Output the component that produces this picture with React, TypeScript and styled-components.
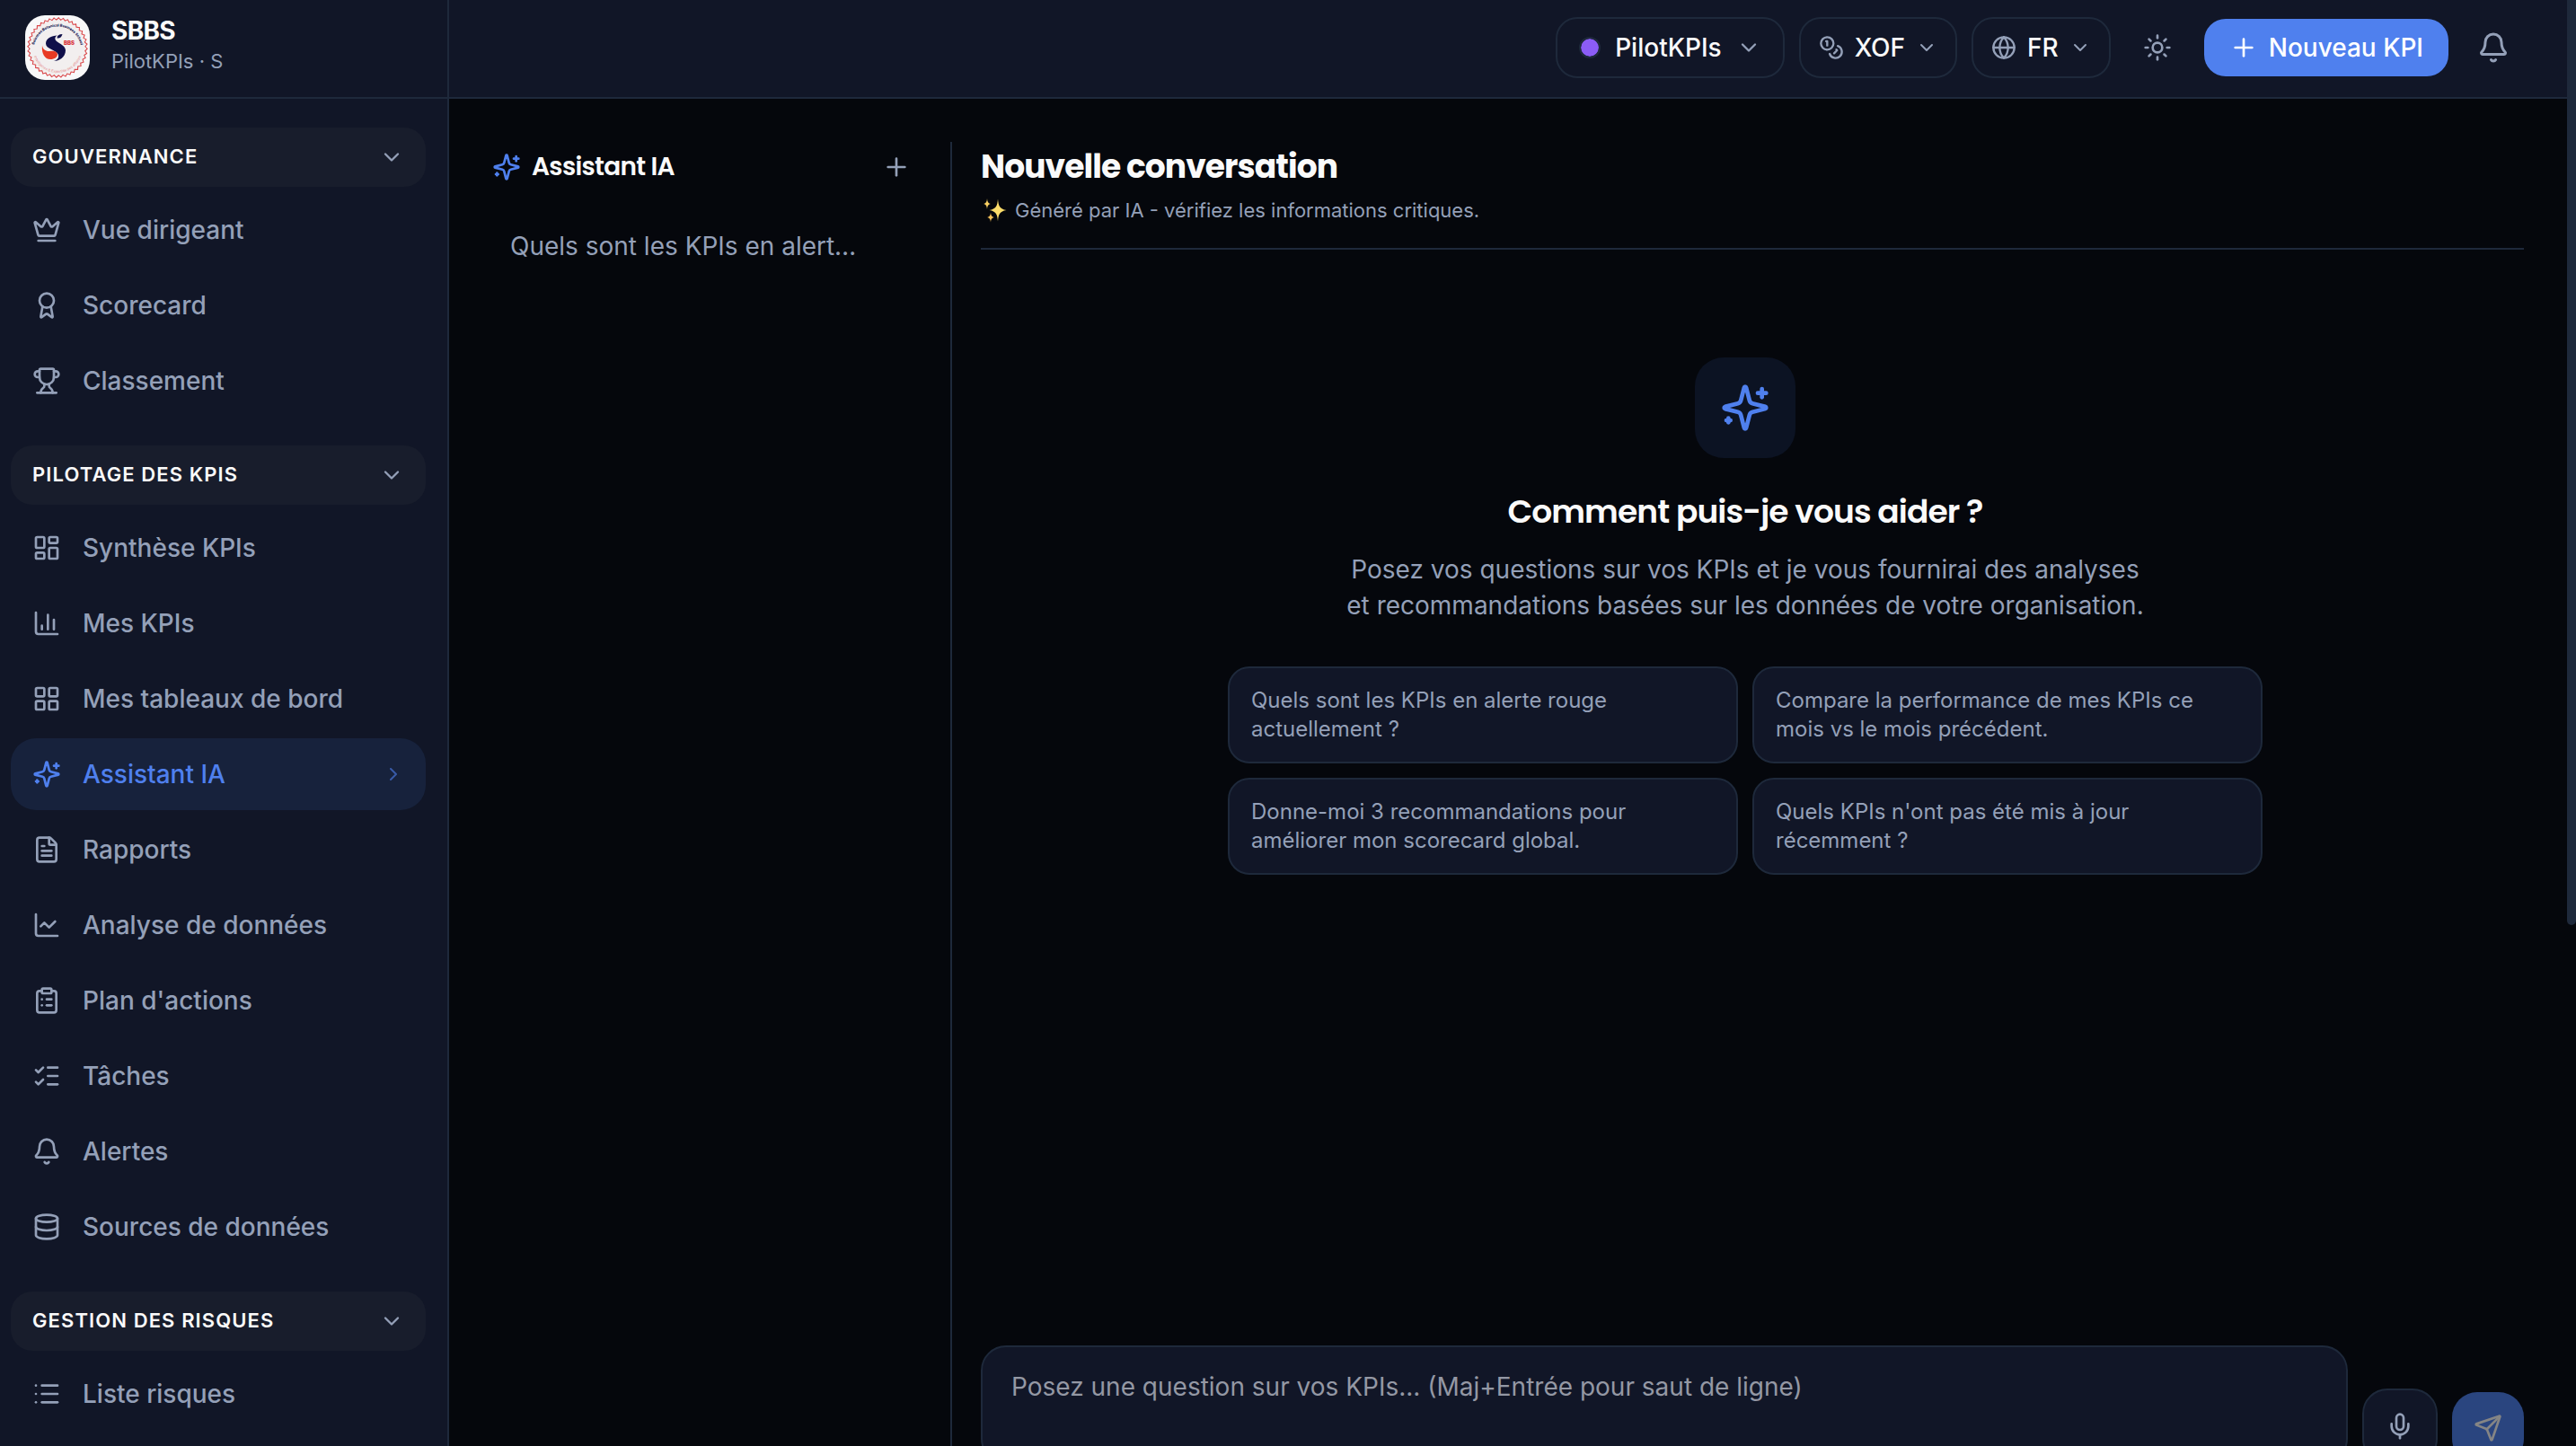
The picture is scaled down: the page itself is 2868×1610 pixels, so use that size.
import React from "react";
import styled, { createGlobalStyle, css } from "styled-components";
import {
  Award,
  Bell,
  ChartColumn,
  ChartLine,
  ChevronDown,
  ChevronRight,
  ClipboardList,
  Crown,
  Database,
  FileText,
  Globe,
  LayoutDashboard,
  LayoutGrid,
  List,
  ListChecks,
  Mic,
  Plus,
  Send,
  Sun,
  Trophy,
} from "lucide-react";

const color = {
  page: "#05070c",
  panel: "#111627",
  section: "#181d2c",
  border: "#1e293b",
  text: "#fafafa",
  muted: "#94a0b8",
  accent: "#4f80ee",
  active: "#17223c",
};

const Global = createGlobalStyle`
  *, *::before, *::after { box-sizing: border-box; }
  body {
    margin: 0;
    background: ${color.page};
    color: ${color.text};
    font-family: Inter, "Noto Sans", sans-serif;
    font-size: 28px;
    line-height: 40px;
    overflow: hidden;
  }
  h1, h2, p, ul { margin: 0; padding: 0; }
  ul { list-style: none; }
  button, textarea { font: inherit; color: inherit; }
  button { border: 0; padding: 0; background: none; cursor: pointer; }
  a { color: inherit; text-decoration: none; }
  svg { flex: none; display: block; }
`;

const Shell = styled.div`
  display: grid;
  grid-template-columns: 500px minmax(0, 1fr) 10px;
  grid-template-rows: 100vh;
  overflow: hidden;
`;

const Sidebar = styled.aside`
  background: ${color.panel};
  border-right: 2px solid ${color.border};
  overflow: hidden;
`;

const Brand = styled.div`
  display: flex;
  align-items: center;
  gap: 24px;
  height: 110px;
  padding: 0 28px 2px;
  border-bottom: 2px solid ${color.border};
`;

const BrandText = styled.div`
  padding-bottom: 6px;
`;

const BrandName = styled.div`
  font-weight: 700;
  font-size: 28px;
  line-height: 36px;
  letter-spacing: -0.025em;
`;

const BrandSub = styled.div`
  font-size: 22px;
  line-height: 32px;
  color: ${color.muted};
`;

const Nav = styled.nav`
  display: flex;
  flex-direction: column;
  gap: 32px;
  padding: 32px 24px 0 12px;
`;

const SectionToggle = styled.button`
  display: flex;
  align-items: center;
  justify-content: space-between;
  width: 100%;
  height: 66px;
  padding: 0 24px;
  margin-bottom: 8px;
  border-radius: 24px;
  background: ${color.section};
  font-size: 22px;
  font-weight: 600;
  letter-spacing: 0.05em;
  line-height: 32px;
  text-transform: uppercase;
  span { padding-bottom: 2px; }
  svg { color: ${color.muted}; }
`;

const NavList = styled.ul`
  display: flex;
  flex-direction: column;
  gap: 4px;
`;

const NavLink = styled.a<{ $active?: boolean }>`
  display: flex;
  align-items: center;
  gap: 24px;
  height: 80px;
  padding: 0 24px;
  border-radius: 28px;
  font-weight: 500;
  color: ${color.muted};
  span { flex: 1; }
  ${(p) =>
    p.$active &&
    css`
      background: ${color.active};
      color: ${color.accent};
    `}
  .go { opacity: 0.6; }
`;

const Content = styled.div`
  min-width: 0;
  display: flex;
  flex-direction: column;
`;

const TopBar = styled.header`
  flex: none;
  display: flex;
  align-items: center;
  justify-content: flex-end;
  gap: 16px;
  height: 110px;
  padding: 0 48px 2px;
  background: ${color.panel};
  border-bottom: 2px solid ${color.border};
`;

const Pill = styled.button<{ $wide?: boolean }>`
  display: flex;
  align-items: center;
  gap: ${(p) => (p.$wide ? 16 : 12)}px;
  height: 68px;
  padding: 0 ${(p) => (p.$wide ? 24 : 20)}px;
  border: 2px solid ${color.border};
  border-radius: 24px;
  font-weight: 500;
  svg { color: ${color.muted}; }
`;

const Dot = styled.span`
  width: 24px;
  height: 24px;
  border: 2px solid ${color.border};
  border-radius: 50%;
  background: #8b5cf6;
  background-clip: padding-box;
`;

const IconButton = styled.button<{ $size: number }>`
  display: grid;
  place-items: center;
  width: ${(p) => p.$size}px;
  height: ${(p) => p.$size}px;
  border-radius: 20px;
  color: ${color.muted};
`;

const PrimaryButton = styled.button`
  display: flex;
  align-items: center;
  gap: 12px;
  height: 64px;
  padding: 0 28px;
  border-radius: 24px;
  background: ${color.accent};
  font-weight: 500;
  color: #fff;
`;

const Main = styled.main`
  display: flex;
  padding: 48px 48px 0;
`;

const History = styled.section`
  flex: none;
  width: 512px;
  height: calc(100vh - 138px);
  padding-right: 32px;
  border-right: 2px solid ${color.border};
`;

const HistoryHead = styled.div`
  display: flex;
  align-items: center;
  gap: 12px;
  height: 56px;
  svg { color: ${color.accent}; }
  button svg { color: ${color.muted}; }
`;

const HistoryTitle = styled.h2`
  flex: 1;
  font-family: Poppins, Inter, sans-serif;
  font-size: 28px;
  font-weight: 600;
  line-height: 40px;
  letter-spacing: -0.025em;
`;

const HistoryItem = styled.a`
  display: block;
  margin-top: 24px;
  padding: 16px 72px 16px 20px;
  color: ${color.muted};
  white-space: nowrap;
  span {
    display: block;
    overflow: hidden;
    text-overflow: ellipsis;
  }
`;

const Chat = styled.section`
  flex: 1;
  min-width: 0;
  display: flex;
  flex-direction: column;
  height: calc(100vh - 138px);
  padding-left: 32px;
`;

const ChatHead = styled.div`
  height: 120px;
  border-bottom: 2px solid ${color.border};
`;

const ChatTitle = styled.h1`
  font-family: Poppins, Inter, sans-serif;
  font-size: 36px;
  font-weight: 700;
  line-height: 56px;
  letter-spacing: -0.025em;
`;

const Notice = styled.p`
  display: flex;
  align-items: center;
  gap: 8px;
  padding-top: 4px;
  font-size: 22px;
  line-height: 32px;
  color: ${color.muted};
`;

const Welcome = styled.div`
  flex: 1;
  display: flex;
  flex-direction: column;
  align-items: center;
  padding: 120px 16px 0 0;
  text-align: center;
`;

const Badge = styled.div`
  display: grid;
  place-items: center;
  width: 112px;
  height: 112px;
  border-radius: 32px;
  background: #0c1323;
  color: ${color.accent};
`;

const WelcomeTitle = styled.h2`
  margin-top: 32px;
  font-family: Poppins, Inter, sans-serif;
  font-size: 36px;
  font-weight: 600;
  line-height: 56px;
  letter-spacing: -0.025em;
`;

const WelcomeText = styled.p`
  max-width: 896px;
  margin-top: 16px;
  color: ${color.muted};
`;

const Suggestions = styled.div`
  display: grid;
  grid-template-columns: 1fr 1fr;
  gap: 16px;
  width: 100%;
  max-width: 1152px;
  margin-top: 48px;
`;

const Suggestion = styled.button`
  padding: 20px 24px;
  border: 2px solid ${color.border};
  border-radius: 24px;
  background: ${color.panel};
  color: ${color.muted};
  font-size: 24px;
  line-height: 32px;
  text-align: left;
`;

const Composer = styled.form`
  display: flex;
  align-items: flex-end;
  gap: 16px;
`;

const Prompt = styled.textarea`
  flex: 1;
  height: 132px;
  padding: 24px 32px;
  border: 2px solid ${color.border};
  border-radius: 28px;
  background: ${color.panel};
  resize: none;
  outline: 0;
  &::placeholder { color: #9498a4; opacity: 1; }
`;

const MicButton = styled.button`
  display: grid;
  place-items: center;
  width: 84px;
  height: 84px;
  border: 2px solid ${color.border};
  border-radius: 28px;
  background: ${color.panel};
  color: ${color.muted};
`;

const SendButton = styled.button`
  display: grid;
  place-items: center;
  width: 80px;
  height: 80px;
  border-radius: 28px;
  background: #2a457f;
  color: #858585;
`;

const ScrollTrack = styled.div`
  background: ${color.page};
`;

const ScrollThumb = styled.div`
  height: 64%;
  background: ${color.border};
  border-radius: 0 0 5px 5px;
`;

type IconProps = { size?: number };

const StrokeIcon = ({ size = 24, children }: IconProps & { children: React.ReactNode }) => (
  <svg
    width={size}
    height={size}
    viewBox="0 0 24 24"
    fill="none"
    stroke="currentColor"
    strokeWidth="2"
    strokeLinecap="round"
    strokeLinejoin="round"
    aria-hidden="true"
  >
    {children}
  </svg>
);

const Sparkles = ({ size }: IconProps) => (
  <StrokeIcon size={size}>
    <path d="M9.937 15.5A2 2 0 0 0 8.5 14.063l-6.135-1.582a.5.5 0 0 1 0-.962L8.5 9.936A2 2 0 0 0 9.937 8.5l1.582-6.135a.5.5 0 0 1 .963 0L14.063 8.5A2 2 0 0 0 15.5 9.937l6.135 1.581a.5.5 0 0 1 0 .964L15.5 14.063a2 2 0 0 0-1.437 1.437l-1.582 6.135a.5.5 0 0 1-.963 0z" />
    <path d="M20 3v4" />
    <path d="M22 5h-4" />
    <path d="M4 17v2" />
    <path d="M5 18H3" />
  </StrokeIcon>
);

const Coins = ({ size }: IconProps) => (
  <StrokeIcon size={size}>
    <circle cx="8" cy="8" r="6" />
    <path d="M18.09 10.37A6 6 0 1 1 10.34 18" />
    <path d="M7 6h1v4" />
    <path d="m16.71 13.88.7.71-2.82 2.82" />
  </StrokeIcon>
);

const sealEdge = Array.from({ length: 161 }, (_, i) => {
  const a = (i / 160) * Math.PI * 2;
  const r = i % 4 === 1 ? 33.2 : i % 4 === 3 ? 31 : 32;
  return `${(36 + r * Math.cos(a)).toFixed(2)},${(36 + r * Math.sin(a)).toFixed(2)}`;
}).join(" ");

const Logo = () => (
  <svg width="72" height="72" viewBox="0 0 72 72" role="img" aria-label="SBBS">
    <defs>
      <path id="seal-top" d="M9.500 39a26.500 26.500 0 1 1 53 0" />
      <path id="seal-bottom" d="M8 36a28 28 0 0 0 56 0" />
    </defs>
    <rect width="72" height="72" rx="22" fill="#f8f8f9" />
    <circle cx="36" cy="36" r="31.5" fill="#f2efef" />
    <polyline points={sealEdge} fill="none" stroke="#d9474a" strokeWidth="1.1" />
    <text fontFamily="Inter, sans-serif" fontSize="4" fontWeight="800" fill="#14164f">
      <textPath href="#seal-top" startOffset="50%" textAnchor="middle">Solomon Botanical Business School</textPath>
    </text>
    <text fontFamily="Inter, sans-serif" fontSize="4" fill="#e58f8f">
      <textPath href="#seal-bottom" startOffset="50%" textAnchor="middle">Intelligence &amp; Expertise des affaires</textPath>
    </text>
    <path
      d="M36 22.500c-7 0-13 3.500-13 9 0 6 11 7 13.500 11.500 2 4-1 7.500-5 8 5 .5 13.500-3.500 13.500-12 0-6-10.500-8.500-11.500-12-.7-2.500 1-4 2.500-4.500z"
      fill="#10104a"
    />
    <path d="M35.500 25.500c0-3 2-4.500 6-4.500-1 3.500-3 5-6 4.500z" fill="#10104a" />
    <path d="M19 33.500c.5 4.500 4 7 8.500 6.500 4-.5 8 0 8.500 3.500 0 3-3 5.500-8 5.500-6 0-10-6-9-15.500z" fill="#e83a24" />
    <text x="43" y="33" fontFamily="Inter, sans-serif" fontSize="6" fontWeight="900" fill="#d93a40">BBS</text>
  </svg>
);

const Stars = () => (
  <svg width="30" height="28" viewBox="0 0 30 28" aria-hidden="true">
    <path d="M19 1.500c.7 8 2 11.200 9.500 12.500-7.500 1.300-8.800 4.500-9.500 12.500-.7-8-2-11.200-9.500-12.500 7.500-1.300 8.800-4.500 9.500-12.500z" fill="#fbdc6a" />
    <path d="M7 1c.4 3.800 1 5.100 4 6-3 .9-3.600 2.200-4 6-.4-3.800-1-5.100-4-6 3-.9 3.600-2.200 4-6z" fill="#f8cf62" />
    <path d="M11 16.500c.4 3.400 1 4.700 4 5.500-3 .8-3.600 2.100-4 5.500-.4-3.400-1-4.700-4-5.500 3-.8 3.600-2.100 4-5.500z" fill="#f3bf58" />
  </svg>
);

type Entry = { label: string; icon: React.ComponentType<{ size?: number }>; active?: boolean };

const sections: { title: string; items: Entry[] }[] = [
  {
    title: "Gouvernance",
    items: [
      { label: "Vue dirigeant", icon: Crown },
      { label: "Scorecard", icon: Award },
      { label: "Classement", icon: Trophy },
    ],
  },
  {
    title: "Pilotage des KPIs",
    items: [
      { label: "Synthèse KPIs", icon: LayoutDashboard },
      { label: "Mes KPIs", icon: ChartColumn },
      { label: "Mes tableaux de bord", icon: LayoutGrid },
      { label: "Assistant IA", icon: Sparkles, active: true },
      { label: "Rapports", icon: FileText },
      { label: "Analyse de données", icon: ChartLine },
      { label: "Plan d'actions", icon: ClipboardList },
      { label: "Tâches", icon: ListChecks },
      { label: "Alertes", icon: Bell },
      { label: "Sources de données", icon: Database },
    ],
  },
  {
    title: "Gestion des risques",
    items: [{ label: "Liste risques", icon: List }],
  },
];

const prompts = [
  "Quels sont les KPIs en alerte rouge actuellement ?",
  "Compare la performance de mes KPIs ce mois vs le mois précédent.",
  "Donne-moi 3 recommandations pour améliorer mon scorecard global.",
  "Quels KPIs n'ont pas été mis à jour récemment ?",
];

export default function App() {
  return (
    <>
      <Global />
      <Shell>
        <Sidebar>
          <Brand>
            <Logo />
            <BrandText>
              <BrandName>SBBS</BrandName>
              <BrandSub>PilotKPIs · S</BrandSub>
            </BrandText>
          </Brand>
          <Nav>
            {sections.map((s) => (
              <div key={s.title}>
                <SectionToggle type="button" aria-expanded="true">
                  <span>{s.title}</span>
                  <ChevronDown size={28} />
                </SectionToggle>
                <NavList>
                  {s.items.map(({ label, icon: Icon, active }) => (
                    <li key={label}>
                      <NavLink href="#" $active={active} aria-current={active ? "page" : undefined}>
                        <Icon size={32} />
                        <span>{label}</span>
                        {active && <ChevronRight className="go" size={24} />}
                      </NavLink>
                    </li>
                  ))}
                </NavList>
              </div>
            ))}
          </Nav>
        </Sidebar>

        <Content>
          <TopBar>
            <Pill type="button" $wide>
              <Dot />
              PilotKPIs
              <ChevronDown size={28} />
            </Pill>
            <Pill type="button">
              <Coins size={28} />
              XOF
              <ChevronDown size={24} />
            </Pill>
            <Pill type="button">
              <Globe size={28} />
              FR
              <ChevronDown size={24} />
            </Pill>
            <IconButton type="button" $size={72} aria-label="Thème clair">
              <Sun size={32} />
            </IconButton>
            <PrimaryButton type="button">
              <Plus size={32} />
              Nouveau KPI
            </PrimaryButton>
            <IconButton type="button" $size={68} aria-label="Notifications">
              <Bell size={36} />
            </IconButton>
          </TopBar>

          <Main>
            <History>
              <HistoryHead>
                <Sparkles size={32} />
                <HistoryTitle>Assistant IA</HistoryTitle>
                <IconButton type="button" $size={56} aria-label="Nouvelle conversation">
                  <Plus size={32} />
                </IconButton>
              </HistoryHead>
              <HistoryItem href="#">
                <span>Quels sont les KPIs en alerte rouge actuellement ?</span>
              </HistoryItem>
            </History>

            <Chat>
              <ChatHead>
                <ChatTitle>Nouvelle conversation</ChatTitle>
                <Notice>
                  <Stars />
                  Généré par IA - vérifiez les informations critiques.
                </Notice>
              </ChatHead>
              <Welcome>
                <Badge>
                  <Sparkles size={56} />
                </Badge>
                <WelcomeTitle>Comment puis-je vous aider ?</WelcomeTitle>
                <WelcomeText>
                  Posez vos questions sur vos KPIs et je vous fournirai des analyses et recommandations basées sur les
                  données de votre organisation.
                </WelcomeText>
                <Suggestions>
                  {prompts.map((p) => (
                    <Suggestion key={p} type="button">
                      {p}
                    </Suggestion>
                  ))}
                </Suggestions>
              </Welcome>
              <Composer onSubmit={(e) => e.preventDefault()}>
                <Prompt
                  aria-label="Votre question"
                  placeholder="Posez une question sur vos KPIs... (Maj+Entrée pour saut de ligne)"
                />
                <MicButton type="button" aria-label="Dicter">
                  <Mic size={32} />
                </MicButton>
                <SendButton type="submit" aria-label="Envoyer">
                  <Send size={32} />
                </SendButton>
              </Composer>
            </Chat>
          </Main>
        </Content>

        <ScrollTrack>
          <ScrollThumb />
        </ScrollTrack>
      </Shell>
    </>
  );
}
